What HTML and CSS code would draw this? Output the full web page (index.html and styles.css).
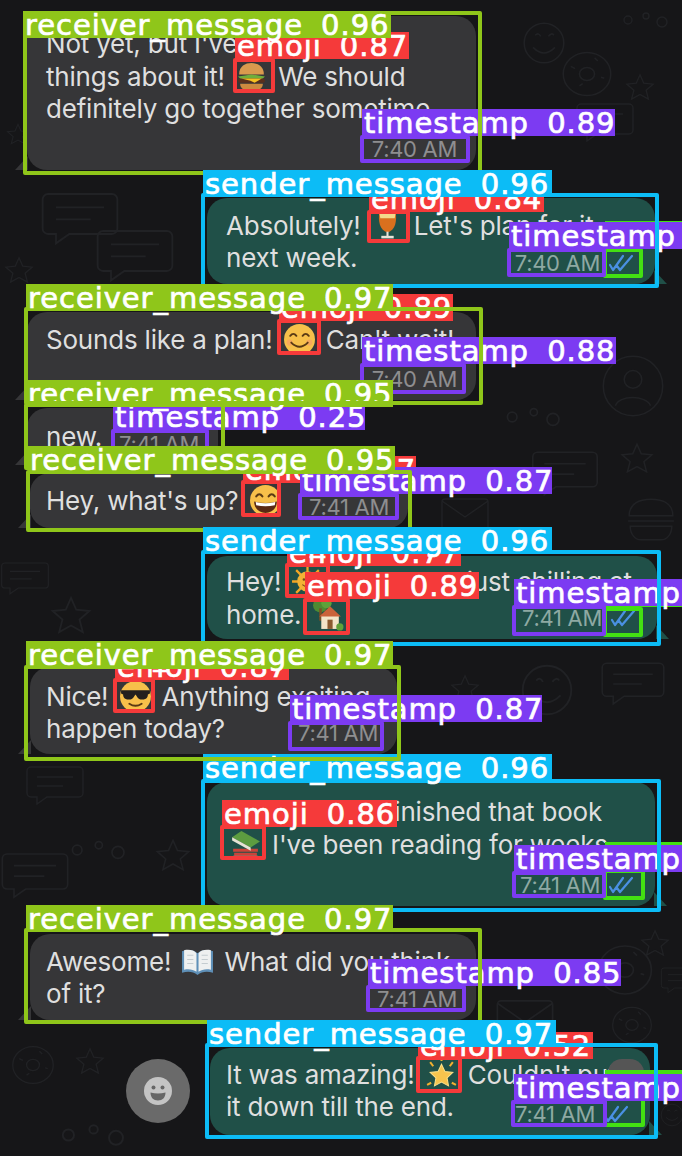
FILE: index.html
```html
<!DOCTYPE html>
<html lang="en">
<head>
<meta charset="utf-8">
<title>Chat detections</title>
<link rel="stylesheet" href="styles.css">
</head>
<body>
<svg class="defs" width="0" height="0" aria-hidden="true">
  <symbol id="burger" viewBox="0 0 32 32"><path d="M4 14C4 6 10 3 16 3s12 3 12 11z" fill="#d99a4e"/><path d="M3 16l13-2 13 2-3 3H6z" fill="#6fae3c"/><rect x="3" y="18" width="26" height="4" rx="2" fill="#5b2f1c"/><path d="M6 18h20l-7 4-4-2z" fill="#f5c021"/><path d="M5 23h22c0 4-3 6-6 6H11c-3 0-6-2-6-6z" fill="#cc8a3f"/></symbol>
  <symbol id="drink" viewBox="0 0 32 32"><path d="M8 3h16c1 9 0 17-8 20C8 20 7 12 8 3z" fill="#d9701e"/><path d="M8 3h16l-1 6H9z" fill="#f3d98a"/><rect x="15" y="22" width="2" height="5" fill="#e8e4d8"/><rect x="10" y="26" width="12" height="2.500" fill="#e8e4d8"/></symbol>
  <symbol id="smile" viewBox="0 0 32 32"><circle cx="16" cy="16" r="15" fill="#f7c04a"/><circle cx="6.5" cy="19" r="3" fill="#f59a6a" opacity=".6"/><circle cx="25.500" cy="19" r="3" fill="#f59a6a" opacity=".6"/><path d="M7 12.500q3-4 6 0M19 12.500q3-4 6 0M8 19q8 8 16 0" fill="none" stroke="#5a3a14" stroke-width="1.800" stroke-linecap="round"/></symbol>
  <symbol id="grin" viewBox="0 0 32 32"><circle cx="16" cy="16" r="15" fill="#f7c04a"/><path d="M7 12q3-4 6 0M19 12q3-4 6 0" fill="none" stroke="#5a3a14" stroke-width="2" stroke-linecap="round"/><path d="M5 17q11 3 22 0c0 7-5 11-11 11S5 24 5 17z" fill="#5a2a14"/><path d="M6.500 17.500q9.500 2.500 19 0l-.5 3q-9 2-18 0z" fill="#fff"/></symbol>
  <symbol id="shades" viewBox="0 0 32 32"><circle cx="16" cy="16" r="15" fill="#f7c04a"/><path d="M2 10h28v3l-2 1c0 4-3 5-6 5s-4-2-6-5c-2 3-3 5-6 5s-6-1-6-5l-2-1z" fill="#23201e"/><path d="M10 23q6 4 12 0" fill="none" stroke="#5a3a14" stroke-width="1.800" stroke-linecap="round"/></symbol>
  <symbol id="sun" viewBox="0 0 32 32"><g stroke="#f5a623" stroke-width="2.200"><path d="M16 1v30M1 16h30M5 5l22 22M27 5L5 27"/></g><circle cx="16" cy="16" r="10" fill="#f3b335"/><circle cx="12.500" cy="14" r="1.200" fill="#7a4a14"/><circle cx="19.500" cy="14" r="1.200" fill="#7a4a14"/><path d="M11 19q5 4 10 0" stroke="#7a4a14" fill="none"/></symbol>
  <symbol id="home" viewBox="0 0 32 32"><circle cx="8" cy="7" r="7" fill="#4f8a32"/><circle cx="14" cy="5" r="5" fill="#5fa13a"/><rect x="7" y="10" width="2.500" height="12" fill="#7a4e24"/><rect x="9" y="17" width="17" height="13" fill="#f2e4c8"/><path d="M7 18L17.500 8 28 18z" fill="#c9623a"/><rect x="15" y="21" width="5" height="9" fill="#8a5a30"/><circle cx="27" cy="28" r="3.500" fill="#5fa13a"/></symbol>
  <symbol id="books" viewBox="0 0 32 32"><path d="M4 20h24v3H4zM5 24h22v3H5z" fill="#c9433a"/><path d="M4 27h24v3H4z" fill="#e8e0cc"/><path d="M3 9l9-6 18 10-9 6z" fill="#5d9c40"/><path d="M3 9l18 10v3L3 12z" fill="#e8e4d4"/></symbol>
  <symbol id="openbook" viewBox="0 0 32 32"><path d="M1 6c6-2 11-1 15 2 4-3 9-4 15-2v21c-6-2-11-1-15 2-4-3-9-4-15-2z" fill="#5f90b8"/><path d="M3 5c5-1 10 0 12 3v18c-3-2-7-3-12-2zM29 5c-5-1-10 0-12 3v18c3-2 7-3 12-2z" fill="#eef0f0"/><path d="M6 10h6M6 14h6M6 18h6M20 10h6M20 14h6M20 18h6" stroke="#c4ccd0"/></symbol>
  <symbol id="star" viewBox="0 0 32 32"><path d="M16 6l3.300 7 7.700 1-5.600 5.300 1.400 7.700-6.800-3.700L9.200 27l1.400-7.700L5 14l7.700-1z" fill="#f6c44d" stroke="#fbe08a"/><path d="M5 4l3 4M27 4l-3 4M16 0v3M2 26l4-2M30 26l-4-2" stroke="#f0b030" stroke-width="2"/></symbol>
  <symbol id="ticks" viewBox="0 0 28 18"><path d="M2 11l3 5L15 2M9 12l3 4L24 2" fill="none" stroke="#4a90e2" stroke-width="2.200" stroke-linecap="round" stroke-linejoin="round"/></symbol>
  <symbol id="d-star" viewBox="0 0 32 32"><path d="M16 3l4 9 10 1-7.500 6.500L25 29l-9-5-9 5 2.500-9.500L2 13l10-1z"/></symbol>
  <symbol id="d-chat" viewBox="0 0 60 40"><path d="M6 2h48a4 4 0 0 1 4 4v22a4 4 0 0 1-4 4H22l-10 7v-7H6a4 4 0 0 1-4-4V6a4 4 0 0 1 4-4zM12 12h36M12 21h26"/></symbol>
  <symbol id="d-face" viewBox="0 0 40 40"><circle cx="20" cy="20" r="18"/><path d="M10 24q10 10 20 0M12 13q3-3 5 1M24 14q3-4 5-1"/></symbol>
  <symbol id="d-donut" viewBox="0 0 50 50"><ellipse cx="25" cy="25" rx="22" ry="20"/><ellipse cx="25" cy="25" rx="7" ry="6"/><path d="M10 18l4 2M32 10l3 3M38 28l3 1M18 36l3-2"/></symbol>
  <symbol id="d-dots" viewBox="0 0 50 20"><circle cx="6" cy="10" r="4"/><circle cx="24" cy="6" r="3"/><circle cx="40" cy="12" r="5"/></symbol>
  <symbol id="d-burger" viewBox="0 0 50 44"><path d="M4 18C4 6 14 2 25 2s21 4 21 16zM3 23h44M5 28h40c0 8-5 13-10 13H15C10 41 5 36 5 28z"/></symbol>
  <symbol id="d-ring" viewBox="0 0 60 60"><circle cx="30" cy="30" r="27"/><circle cx="30" cy="24" r="8"/><path d="M14 48c3-10 28-10 32 0"/></symbol>
  <symbol id="d-env" viewBox="0 0 50 36"><rect x="2" y="2" width="46" height="32" rx="3"/><path d="M2 4l23 16L48 4"/></symbol>
</svg>

<main class="stage">
  <svg class="doodles" width="682" height="1156" aria-hidden="true">
    <use href="#d-face" x="522" y="18" width="44" height="50"/>
    <use href="#d-donut" x="560" y="45" width="54" height="58"/>
    <use href="#d-star" x="625" y="70" width="30" height="34"/>
    <use href="#d-star" x="6" y="120" width="24" height="28"/>
    <use href="#d-chat" x="575" y="92" width="60" height="60"/>
    <use href="#d-dots" x="622" y="8" width="50" height="24"/>
    <use href="#d-chat" x="40" y="185" width="80" height="66"/>
    <use href="#d-chat" x="95" y="220" width="80" height="70"/>
    <use href="#d-star" x="4" y="255" width="30" height="30"/>
    <use href="#d-dots" x="500" y="405" width="70" height="24"/>
    <use href="#d-ring" x="600" y="350" width="66" height="72"/>
    <use href="#d-burger" x="625" y="490" width="52" height="60"/>
    <use href="#d-star" x="620" y="440" width="34" height="36"/>
    <use href="#d-chat" x="520" y="450" width="90" height="46"/>
    <use href="#d-env" x="440" y="495" width="50" height="40"/>
    <use href="#d-chat" x="0" y="545" width="50" height="66"/>
    <use href="#d-star" x="50" y="590" width="42" height="50"/>
    <use href="#d-face" x="520" y="660" width="54" height="60"/>
    <use href="#d-star" x="450" y="670" width="30" height="36"/>
    <use href="#d-chat" x="600" y="655" width="66" height="56"/>
    <use href="#d-chat" x="10" y="765" width="90" height="40"/>
    <use href="#d-star" x="155" y="835" width="36" height="40"/>
    <use href="#d-chat" x="0" y="850" width="70" height="50"/>
    <use href="#d-dots" x="70" y="835" width="60" height="30"/>
    <use href="#d-donut" x="595" y="935" width="60" height="70"/>
    <use href="#d-env" x="495" y="995" width="60" height="50"/>
    <use href="#d-star" x="640" y="925" width="30" height="36"/>
    <use href="#d-donut" x="610" y="1000" width="44" height="50"/>
    <use href="#d-donut" x="10" y="1040" width="46" height="50"/>
    <use href="#d-star" x="75" y="1045" width="30" height="32"/>
    <use href="#d-dots" x="60" y="1120" width="70" height="30"/>
    <use href="#d-face" x="660" y="1090" width="24" height="50"/>
    <use href="#d-chat" x="660" y="960" width="40" height="40"/>
  </svg>

  <section class="chat">
    <article class="bubble in m1">
      <p class="text">Not yet, but I've heard great<br>things about it! <svg class="emo"><use href="#burger"/></svg> We should<br>definitely go together sometime.</p>
      <span class="meta"><span class="time">7:40 AM</span></span>
    </article>
    <article class="bubble out m2">
      <p class="text">Absolutely! <svg class="emo"><use href="#drink"/></svg> Let's plan for it<br>next week.</p>
      <span class="meta"><span class="time">7:40 AM</span><svg class="tick"><use href="#ticks"/></svg></span>
    </article>
    <article class="bubble in m3">
      <p class="text">Sounds like a plan! <svg class="emo"><use href="#smile"/></svg> Can't wait!</p>
      <span class="meta"><span class="time">7:40 AM</span></span>
    </article>
    <article class="bubble in m4 near">
      <p class="text">new.</p>
      <span class="meta"><span class="time">7:41 AM</span></span>
    </article>
    <article class="bubble in m5 near">
      <p class="text">Hey, what's up? <svg class="emo"><use href="#grin"/></svg></p>
      <span class="meta"><span class="time">7:41 AM</span></span>
    </article>
    <article class="bubble out m6">
      <p class="text">Hey! <svg class="emo"><use href="#sun"/></svg> Not much, just chilling at<br>home. <svg class="emo"><use href="#home"/></svg></p>
      <span class="meta"><span class="time">7:41 AM</span><svg class="tick"><use href="#ticks"/></svg></span>
    </article>
    <article class="bubble in m7">
      <p class="text">Nice! <svg class="emo"><use href="#shades"/></svg> Anything exciting<br>happen today?</p>
      <span class="meta"><span class="time">7:41 AM</span></span>
    </article>
    <article class="bubble out m8">
      <p class="text">Yes, I've just finished that book<br><svg class="emo"><use href="#books"/></svg> I've been reading for weeks.</p>
      <span class="meta"><span class="time">7:41 AM</span><svg class="tick"><use href="#ticks"/></svg></span>
    </article>
    <article class="bubble in m9">
      <p class="text">Awesome! <svg class="emo"><use href="#openbook"/></svg> What did you think<br>of it?</p>
      <span class="meta"><span class="time">7:41 AM</span></span>
    </article>
    <article class="bubble out m10">
      <p class="text">It was amazing! <svg class="emo"><use href="#star"/></svg> Couldn't put<br>it down till the end.</p>
      <span class="meta"><span class="time">7:41 AM</span><svg class="tick"><use href="#ticks"/></svg></span>
    </article>
  </section>

  <button class="fab emoji-fab" type="button" aria-label="Emoji">
    <svg class="fab-face" viewBox="0 0 28 28"><circle cx="14" cy="14" r="14" fill="#c4c4c4"/><circle cx="9.500" cy="10.500" r="2" fill="#666"/><circle cx="18.500" cy="10.500" r="2" fill="#666"/><path d="M6.500 15.500q7.500 2 15 0c0 5-3 8-7.500 8s-7.500-3-7.500-8z" fill="#666"/></svg>
  </button>
  <div class="fab down-fab"></div>

  <div class="overlay">
    <div class="box c-time b-s0"></div><div class="tag c-time t-s0">timestamp 0.25</div>
    <div class="box c-emoji b-e0"></div><div class="tag c-emoji t-e0">emoji 0.52</div>
    <div class="box c-emoji b-e1"></div><div class="tag c-emoji t-e1">emoji 0.77</div>
    <div class="box c-tick b-k1"></div><div class="tag c-tick t-k1"></div>
    <div class="box c-tick b-k2"></div><div class="tag c-tick t-k2"></div>
    <div class="box c-tick b-k3"></div><div class="tag c-tick t-k3"></div>
    <div class="box c-tick b-k4"></div><div class="tag c-tick t-k4"></div>
    <div class="box c-emoji b-e2"></div><div class="tag c-emoji t-e2">emoji 0.84</div>
    <div class="box c-time b-s1"></div><div class="tag c-time t-s1">timestamp 0.85</div>
    <div class="box c-emoji b-e3"></div><div class="tag c-emoji t-e3">emoji 0.86</div>
    <div class="box c-emoji b-e4"></div><div class="tag c-emoji t-e4">emoji 0.87</div>
    <div class="box c-emoji b-e5"></div><div class="tag c-emoji t-e5">emoji 0.87</div>
    <div class="box c-emoji b-e6"></div><div class="tag c-emoji t-e6">emoji 0.87</div>
    <div class="box c-time b-s2"></div><div class="tag c-time t-s2">timestamp 0.87</div>
    <div class="box c-time b-s3"></div><div class="tag c-time t-s3">timestamp 0.87</div>
    <div class="box c-time b-s4"></div><div class="tag c-time t-s4">timestamp 0.88</div>
    <div class="box c-emoji b-e7"></div><div class="tag c-emoji t-e7">emoji 0.89</div>
    <div class="box c-emoji b-e8"></div><div class="tag c-emoji t-e8">emoji 0.89</div>
    <div class="box c-time b-s5"></div><div class="tag c-time t-s5">timestamp 0.89</div>
    <div class="box c-time b-s6"></div><div class="tag c-time t-s6">timestamp 0.90</div>
    <div class="box c-time b-s7"></div><div class="tag c-time t-s7">timestamp 0.90</div>
    <div class="box c-time b-s8"></div><div class="tag c-time t-s8">timestamp 0.90</div>
    <div class="box c-time b-s9"></div><div class="tag c-time t-s9">timestamp 0.90</div>
    <div class="box c-recv b-r3"></div><div class="tag c-recv t-r3">receiver_message 0.95</div>
    <div class="box c-recv b-r4"></div><div class="tag c-recv t-r4">receiver_message 0.95</div>
    <div class="box c-recv b-r1"></div><div class="tag c-recv t-r1">receiver_message 0.96</div>
    <div class="box c-send b-o1"></div><div class="tag c-send t-o1">sender_message 0.96</div>
    <div class="box c-send b-o2"></div><div class="tag c-send t-o2">sender_message 0.96</div>
    <div class="box c-send b-o3"></div><div class="tag c-send t-o3">sender_message 0.96</div>
    <div class="box c-recv b-r2"></div><div class="tag c-recv t-r2">receiver_message 0.97</div>
    <div class="box c-recv b-r5"></div><div class="tag c-recv t-r5">receiver_message 0.97</div>
    <div class="box c-recv b-r6"></div><div class="tag c-recv t-r6">receiver_message 0.97</div>
    <div class="box c-send b-o4"></div><div class="tag c-send t-o4">sender_message 0.97</div>
  </div>
</main>
</body>
</html>
```
FILE: styles.css
```css
* { box-sizing: border-box; }
html, body { margin: 0; padding: 0; background: #161618; overflow: hidden; }
.defs { position: absolute; }

.stage { position: relative; width: 682px; height: 1156px; overflow: hidden; background: #161618; font-family: Inter, "Liberation Sans", sans-serif; }
.doodles { position: absolute; inset: 0; fill: none; stroke: #212225; stroke-width: 1.4; }

.chat { position: relative; display: flex; flex-direction: column; padding-top: 16px; }
.bubble { position: relative; border-radius: 20px; padding: 12px 20px 10px 19px; margin-top: 28px; flex: none; }
.bubble:first-child { margin-top: 0; }
.bubble.near { margin-top: 8px; }
.bubble::after { content: ""; position: absolute; bottom: 0; width: 13px; height: 14px; background: inherit; }
.in { background: #363638; margin-left: 27px; }
.in::after { left: -12px; clip-path: polygon(0 100%, 100% 0, 100% 100%); }
.out { background: #205048; margin-left: 207px; }
.out::after { right: -12px; clip-path: polygon(100% 100%, 0 0, 0 100%); }

.text { margin: 0; font-size: 26px; line-height: 32px; color: #dfdfdf; white-space: nowrap; letter-spacing: -.2px; }
.emo { width: 33px; height: 33px; margin: 0 3px; vertical-align: -7px; }
.meta { position: absolute; right: 19px; bottom: 9px; display: flex; align-items: center; gap: 8px; }
.time { font-size: 22px; line-height: 24px; color: #8e8e90; letter-spacing: -.3px; white-space: nowrap; }
.out .time { color: #8ea9a3; }
.tick { width: 28px; height: 18px; }

.m1 { width: 449px; height: 154px; }
.m2 { width: 448px; height: 86px; padding-top: 11px; }
.m3 { width: 449px; height: 88px; padding-top: 11px; }
.m4 { width: 191px; height: 57px; padding-top: 13px; }
.m5 { width: 378px; height: 55px; margin-left: 30px; padding-left: 16px; padding-top: 11px; }
.m6 { width: 450px; height: 83px; padding-top: 9px; }
.m7 { width: 367px; height: 87px; margin-left: 30px; padding-left: 16px; padding-top: 13px; }
.m8 { width: 448px; height: 124px; padding-top: 14px; }
.m9 { width: 446px; height: 86px; margin-left: 30px; padding-left: 16px; padding-top: 11px; }
.m10 { width: 440px; height: 87px; margin-left: 210px; padding-left: 16px; padding-top: 10px; }

.fab { position: absolute; border: 0; padding: 0; }
.emoji-fab { left: 126px; top: 1059px; width: 64px; height: 64px; border-radius: 50%; background: #6a6a6a; display: flex; align-items: center; justify-content: center; }
.fab-face { width: 28px; height: 28px; }
.down-fab { left: 608px; top: 1059px; width: 36px; height: 40px; border-radius: 14px; background: #555; }

.overlay { position: absolute; inset: 0; }
.box { position: absolute; border: 4px solid; border-radius: 2px; }
.tag { position: absolute; height: 27px; line-height: 29px; padding-left: 2px; color: #fff; white-space: pre; font-family: "DejaVu Sans", sans-serif; font-size: 29px; letter-spacing: .95px; word-spacing: 8px; -webkit-text-stroke: .7px #fff; }
.box.c-recv { border-color: #8fc61a; } .tag.c-recv { background: #8fc61a; }
.box.c-send { border-color: #0cbcf6; } .tag.c-send { background: #0cbcf6; }
.box.c-emoji { border-color: #f53a3a; } .tag.c-emoji { background: #f53a3a; }
.box.c-time { border-color: #7c3bf2; } .tag.c-time { background: #7c3bf2; }
.box.c-tick { border-color: #43e012; } .tag.c-tick { background: #43e012; }

.b-r1 { left: 23px; top: 11px; width: 459px; height: 164px; } .t-r1 { left: 23px; top: 11px; width: 368px; }
.b-o1 { left: 201px; top: 193px; width: 458px; height: 95px; } .t-o1 { left: 203px; top: 170px; width: 349px; }
.b-r2 { left: 24px; top: 307px; width: 459px; height: 98px; } .t-r2 { left: 26px; top: 284px; width: 367px; }
.b-r3 { left: 24px; top: 403px; width: 201px; height: 67px; } .t-r3 { left: 26px; top: 380px; width: 367px; }
.b-r4 { left: 26px; top: 470px; width: 386px; height: 62px; } .t-r4 { left: 28px; top: 446px; width: 367px; }
.b-o2 { left: 201px; top: 550px; width: 460px; height: 96px; } .t-o2 { left: 203px; top: 527px; width: 349px; }
.b-r5 { left: 24px; top: 665px; width: 377px; height: 96px; } .t-r5 { left: 26px; top: 641px; width: 367px; }
.b-o3 { left: 201px; top: 779px; width: 460px; height: 133px; } .t-o3 { left: 203px; top: 754px; width: 349px; }
.b-r6 { left: 24px; top: 928px; width: 458px; height: 96px; } .t-r6 { left: 26px; top: 905px; width: 367px; }
.b-o4 { left: 205px; top: 1043px; width: 453px; height: 96px; } .t-o4 { left: 207px; top: 1020px; width: 349px; }

.b-s0 { left: 111px; top: 429px; width: 98px; height: 28px; } .t-s0 { left: 113px; top: 403px; width: 252px; }
.b-s1 { left: 366px; top: 985px; width: 100px; height: 27px; } .t-s1 { left: 368px; top: 959px; width: 253px; }
.b-s2 { left: 298px; top: 493px; width: 101px; height: 27px; } .t-s2 { left: 300px; top: 467px; width: 252px; }
.b-s3 { left: 288px; top: 721px; width: 96px; height: 30px; } .t-s3 { left: 290px; top: 695px; width: 252px; }
.b-s4 { left: 360px; top: 363px; width: 106px; height: 31px; } .t-s4 { left: 362px; top: 337px; width: 254px; }
.b-s5 { left: 360px; top: 135px; width: 110px; height: 28px; } .t-s5 { left: 362px; top: 109px; width: 253px; }
.b-s6 { left: 507px; top: 248px; width: 99px; height: 29px; } .t-s6 { left: 509px; top: 222px; width: 252px; }
.b-s7 { left: 512px; top: 605px; width: 94px; height: 31px; } .t-s7 { left: 514px; top: 579px; width: 252px; }
.b-s8 { left: 512px; top: 871px; width: 94px; height: 27px; } .t-s8 { left: 514px; top: 845px; width: 252px; }
.b-s9 { left: 511px; top: 1100px; width: 96px; height: 27px; } .t-s9 { left: 514px; top: 1074px; width: 252px; }

.b-e0 { left: 416px; top: 1056px; width: 46px; height: 37px; } .t-e0 { left: 418px; top: 1032px; width: 175px; }
.b-e1 { left: 285px; top: 563px; width: 45px; height: 35px; } .t-e1 { left: 287px; top: 539px; width: 174px; }
.b-e2 { left: 367px; top: 210px; width: 43px; height: 33px; } .t-e2 { left: 369px; top: 185px; width: 175px; }
.b-e3 { left: 220px; top: 825px; width: 46px; height: 35px; } .t-e3 { left: 222px; top: 800px; width: 175px; }
.b-e4 { left: 233px; top: 58px; width: 42px; height: 35px; } .t-e4 { left: 235px; top: 32px; width: 174px; }
.b-e5 { left: 241px; top: 480px; width: 40px; height: 37px; } .t-e5 { left: 243px; top: 456px; width: 173px; }
.b-e6 { left: 113px; top: 678px; width: 42px; height: 35px; } .t-e6 { left: 115px; top: 653px; width: 174px; }
.b-e7 { left: 277px; top: 319px; width: 44px; height: 36px; } .t-e7 { left: 279px; top: 294px; width: 174px; }
.b-e8 { left: 303px; top: 598px; width: 47px; height: 37px; } .t-e8 { left: 305px; top: 572px; width: 174px; }

.b-k1 { left: 603px; top: 248px; width: 40px; height: 30px; } .t-k1 { left: 605px; top: 221px; width: 120px; }
.b-k2 { left: 603px; top: 607px; width: 40px; height: 30px; } .t-k2 { left: 605px; top: 580px; width: 120px; }
.b-k3 { left: 603px; top: 869px; width: 42px; height: 31px; } .t-k3 { left: 605px; top: 842px; width: 120px; }
.b-k4 { left: 603px; top: 1097px; width: 42px; height: 30px; } .t-k4 { left: 605px; top: 1070px; width: 120px; }
```
